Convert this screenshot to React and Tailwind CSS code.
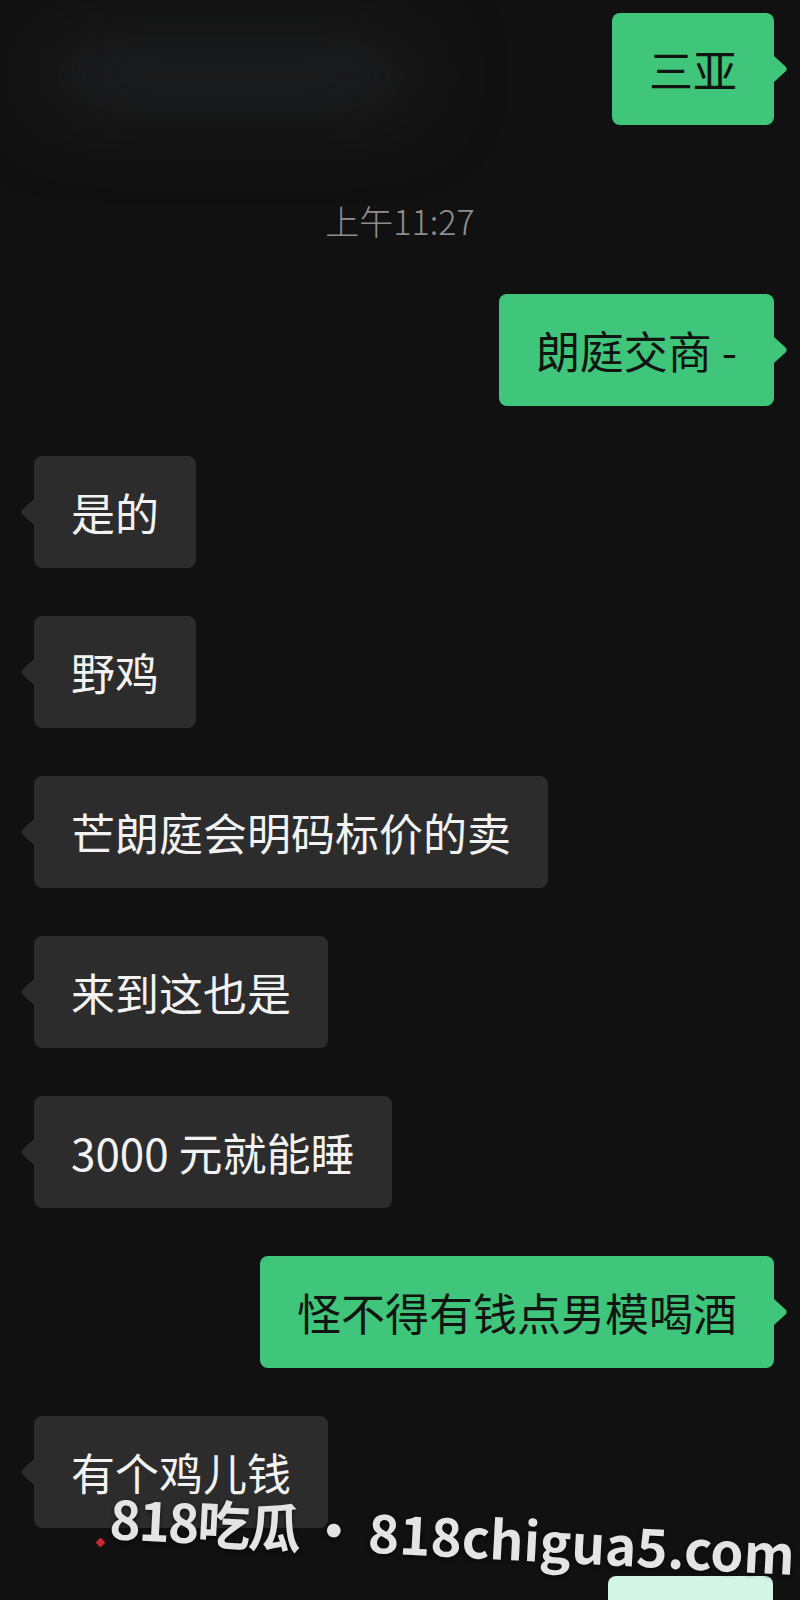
import React from 'react';

const FONT = '"Noto Sans CJK SC", "Noto Sans", sans-serif';

const messages = [
    { side: 'left', text: '是的' },
    { side: 'left', text: '野鸡' },
    { side: 'left', text: '芒朗庭会明码标价的卖' },
    { side: 'left', text: '来到这也是' },
    { side: 'left', text: '3000 元就能睡' },
    { side: 'right', text: '怪不得有钱点男模喝酒' },
    { side: 'left', text: '有个鸡儿钱' },
];

const Tail = ({ side }) => {
    if (side === 'right') {
        return (
            <svg className="absolute left-full top-1/2 -translate-y-1/2" width="14" height="26" viewBox="0 0 14 26">
                <path d="M0 0 L12 11 Q13.5 13 12 15 L0 26 Z" fill="#3fc67b" />
            </svg>
        );
    }
    return (
        <svg className="absolute right-full top-1/2 -translate-y-1/2" width="14" height="26" viewBox="0 0 14 26">
            <path d="M14 0 L2 11 Q0.5 13 2 15 L14 26 Z" fill="#2c2c2c" />
        </svg>
    );
};

const Bubble = ({ side, text, className = '' }) => {
    const isRight = side === 'right';
    return (
        <div className={`relative h-[112px] px-[37px] flex items-center rounded-[8px] text-[44px] leading-none whitespace-nowrap ${isRight ? 'self-end mr-[26px] bg-[#3fc67b] text-[#111411]' : 'self-start ml-[34px] bg-[#2c2c2c] text-[#f2f2f2]'} ${className}`}>
            {text}
            <Tail side={side} />
        </div>
    );
};

export default function App() {
    return (
        <div className="relative w-[800px] h-[1600px] overflow-hidden bg-[#111111]" style={{ fontFamily: FONT }}>
            {/* faint glow top-left */}
            <div className="absolute left-[40px] top-[40px] w-[380px] h-[70px] bg-[#1f2022] blur-2xl rounded-full" />

            <div className="relative flex flex-col pt-[13px]">
                <Bubble side="right" text="三亚" className="h-[111px]" />

                <div className="mt-[76px] h-[40px] flex items-center justify-center text-[34px] font-light text-[#8e8e8e] leading-none">
                    上午11:27
                </div>

                <Bubble side="right" text="朗庭交商 -" className="mt-[53px]" />

                <div className="flex flex-col gap-12 mt-[50px]">
                    {messages.map((m, i) => (
                        <Bubble key={i} side={m.side} text={m.text} />
                    ))}
                    <div className="self-end mr-[27px] w-[165px] h-[60px] rounded-t-[8px] bg-[#d3f5e6]" />
                </div>
            </div>

            {/* watermark */}
            <div className="absolute left-[97px] top-[1539px] w-[7px] h-[7px] rotate-45 bg-[#c62a2d]" />
            <div className="absolute left-[110px] top-[1490px] origin-left rotate-[3deg] flex items-center whitespace-nowrap text-[53px] font-bold leading-none text-[#e4e4e4] [text-shadow:0_2px_4px_rgba(0,0,0,0.6)]">
                <span className="tracking-[-2px]">818吃瓜</span>
                <span className="mx-[8px]">·</span>
                <span>818chigua5.com</span>
            </div>
        </div>
    );
}
